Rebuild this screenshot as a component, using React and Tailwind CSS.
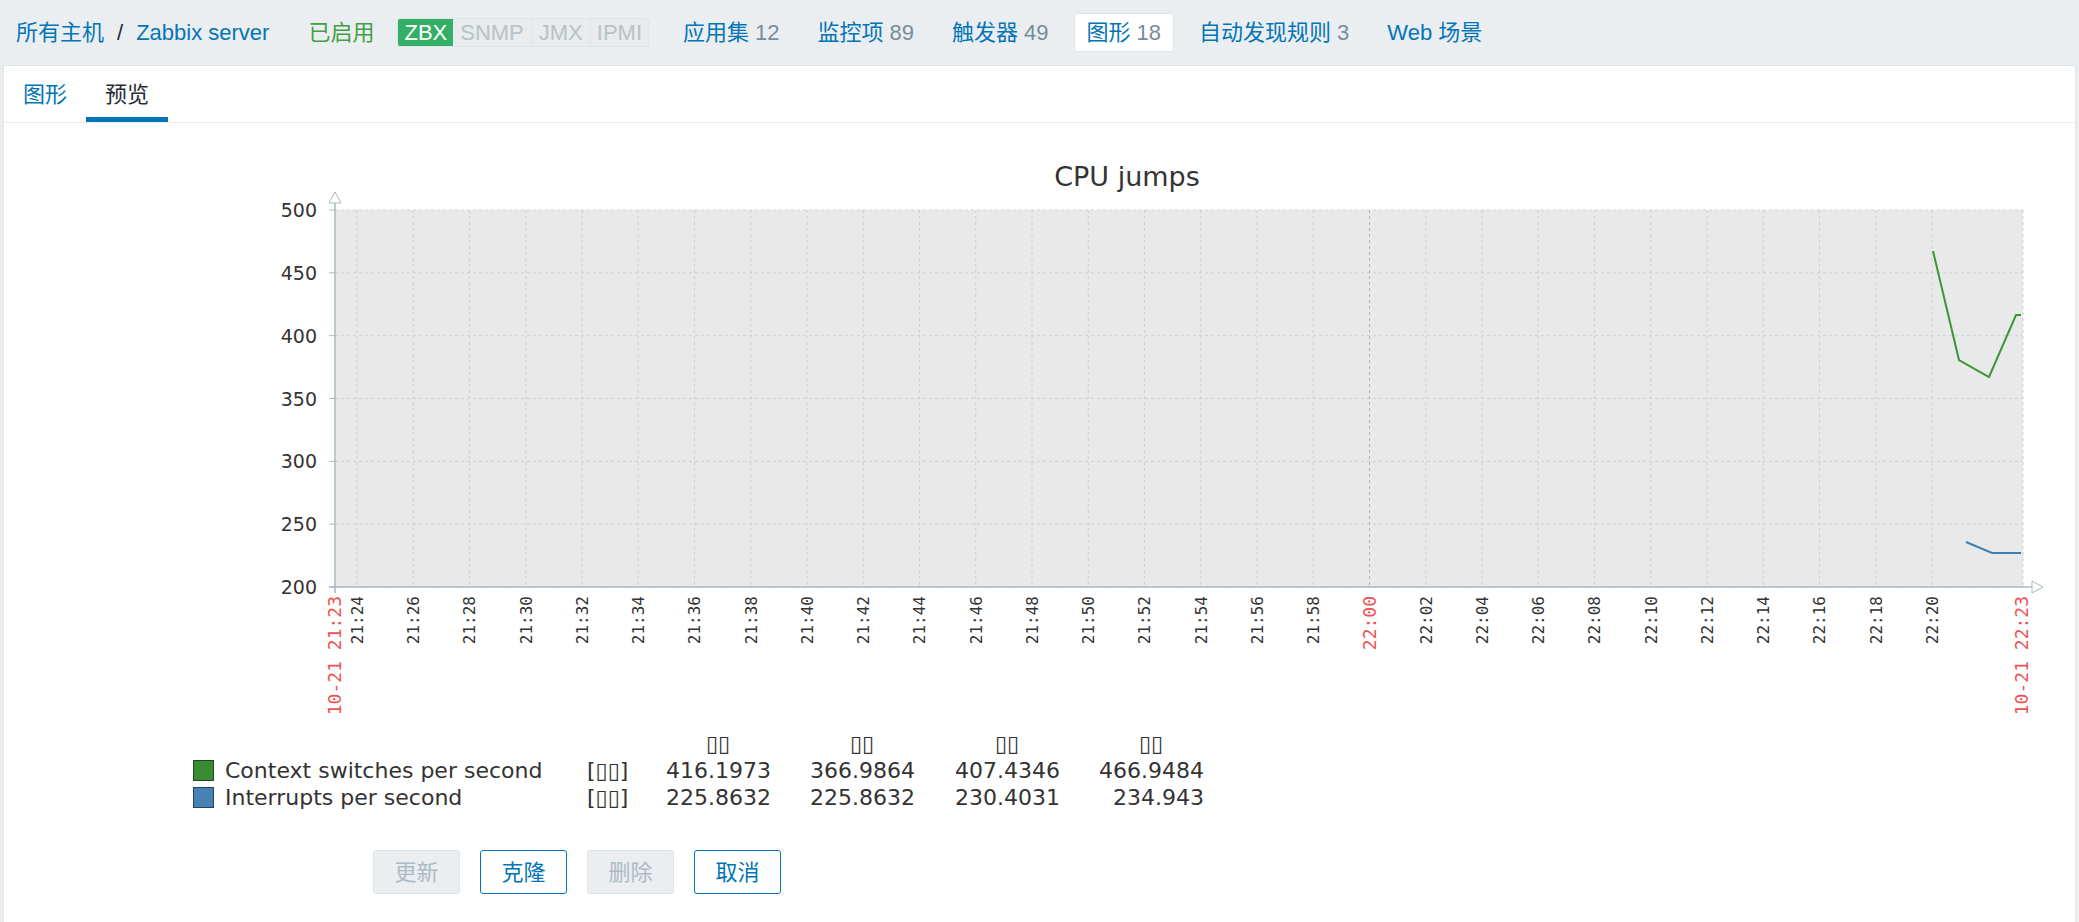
import React from 'react'

const sans = "font-['Liberation_Sans','Noto_Sans_CJK_SC',sans-serif]"

// plot area in page coordinates (the svg's viewBox starts at its own page offset)
const X0 = 335
const X1 = 2023
const Y0 = 210
const Y1 = 587
const yFor = (v) => Y0 + ((500 - v) * (Y1 - Y0)) / 300
const tickX = (k) => 357 + k * 56.25

// 21:24 .. 22:20, every two minutes (22:22 sits too close to the end label)
const ticks = Array.from({ length: 29 }, (_, k) => {
  const m = 24 + k * 2
  const h = m >= 60 ? 22 : 21
  const mm = String(m % 60).padStart(2, '0')
  return { x: tickX(k), label: `${h}:${mm}`, major: m === 60 }
})

const navItems = [
  { label: '应用集', count: 12 },
  { label: '监控项', count: 89 },
  { label: '触发器', count: 49 },
  { label: '图形', count: 18, active: true },
  { label: '自动发现规则', count: 3 },
  { label: 'Web 场景' },
]

const legend = [
  { name: 'Context switches per second', fill: '#3a8c34', border: '#1e4a1a', values: ['416.1973', '366.9864', '407.4346', '466.9484'] },
  { name: 'Interrupts per second', fill: '#4682b4', border: '#23425c', values: ['225.8632', '225.8632', '230.4031', '234.943'] },
]

function RotLabel({ x, text, size, color }) {
  const bx = x + size * 0.36
  return (
    <text
      transform={`translate(${bx} 596) rotate(-90)`}
      textAnchor="end"
      fontSize={size}
      fontFamily="DejaVu Sans Mono, monospace"
      fill={color}
    >
      {text}
    </text>
  )
}

function Chart() {
  const hLines = [500, 450, 400, 350, 300, 250, 200]
  return (
    <svg width={2040} height={602} viewBox="4 123 2040 602" className="block">
      <text x={1127} y={186} textAnchor="middle" fontSize={27} fontFamily="DejaVu Sans, sans-serif" fill="#333">
        CPU jumps
      </text>

      <rect x={X0} y={Y0} width={X1 - X0} height={Y1 - Y0} fill="#e9e9e9" />

      {hLines.map((v) => (
        <g key={v}>
          <line x1={X0} x2={X1} y1={yFor(v)} y2={yFor(v)} stroke="#c9d2d7" strokeDasharray="3 3" />
          <line x1={X0 - 6} x2={X0} y1={yFor(v)} y2={yFor(v)} stroke="#aab8bf" />
          <text x={317} y={yFor(v) + 7} textAnchor="end" fontSize={19} fontFamily="DejaVu Sans, sans-serif" fill="#333">
            {v}
          </text>
        </g>
      ))}

      {ticks.map((t) => (
        <line
          key={t.label}
          x1={t.x}
          x2={t.x}
          y1={Y0}
          y2={Y1}
          stroke={t.major ? '#a9b5bb' : '#c9d2d7'}
          strokeDasharray="3 3"
        />
      ))}
      <line x1={X1} x2={X1} y1={Y0} y2={Y1} stroke="#c9d2d7" strokeDasharray="3 3" />

      {/* axes */}
      <line x1={X0} x2={X0} y1={203} y2={593} stroke="#aab8bf" strokeWidth={1.5} />
      <line x1={X0 - 6} x2={2032} y1={Y1} y2={Y1} stroke="#aab8bf" strokeWidth={1.5} />
      <polygon points="335,192 329,203 341,203" fill="white" stroke="#aab8bf" />
      <polygon points="2043,587 2032,581 2032,593" fill="white" stroke="#aab8bf" />

      {/* data */}
      <polyline
        points="1933,251 1959,360 1989,377 2016,315 2021,315"
        fill="none"
        stroke="#3c9637"
        strokeWidth={2}
      />
      <polyline points="1966,542 1992,553 2021,553" fill="none" stroke="#3f7fb5" strokeWidth={2} />

      {/* time labels */}
      {ticks.map((t) => (
        <RotLabel
          key={t.label}
          x={t.x}
          text={t.label}
          size={t.major ? 18 : 16}
          color={t.major ? '#f05050' : '#333'}
        />
      ))}
      <RotLabel x={X0} text="10-21 21:23" size={18} color="#f05050" />
      <RotLabel x={2022} text="10-21 22:23" size={18} color="#f05050" />
    </svg>
  )
}

function Legend() {
  const cols = ['w-[143px]', 'w-[144px]', 'w-[145px]', 'w-[144px]']
  return (
    <div className="font-['DejaVu_Sans',sans-serif] text-[22px] leading-[27px] text-[#333] pt-[5px] pl-[189px]">
      <div className="flex">
        <div className="w-[434px]" />
        {cols.map((c, i) => (
          <div key={i} className={`${c} flex justify-end`}>
            <span className="w-[104px] text-center">▯▯</span>
          </div>
        ))}
      </div>
      {legend.map((row) => (
        <div key={row.name} className="flex items-center">
          <span
            className="w-[21px] h-[21px] border mr-[11px] shrink-0"
            style={{ background: row.fill, borderColor: row.border }}
          />
          <span className="w-[362px] whitespace-nowrap">{row.name}</span>
          <span className="w-[41px] whitespace-nowrap">[▯▯]</span>
          {row.values.map((v, i) => (
            <span key={i} className={`${cols[i]} text-right`}>{v}</span>
          ))}
        </div>
      ))}
    </div>
  )
}

export default function App() {
  return (
    <div className={`${sans} h-[922px] flex flex-col bg-[#ebeef0] text-[22px] overflow-hidden`}>
      {/* host navigation */}
      <div className="h-[65px] shrink-0 flex items-center pl-[16px] whitespace-nowrap">
        <a className="text-[#0275b8]">所有主机</a>
        <span className="mx-[13px] text-[#1f2c33]">/</span>
        <a className="text-[#0275b8]">Zabbix server</a>
        <span className="ml-[39px] text-[#429e47]">已启用</span>
        <div className="ml-[23px] flex h-[29px] rounded-[3px] overflow-hidden border border-[#dfe4e7] leading-[27px]">
          <span className="px-[6px] bg-[#34af67] text-white">ZBX</span>
          <span className="px-[7px] bg-[#e9ebec] text-[#b7c2c8] border-r border-[#dfe4e7]">SNMP</span>
          <span className="px-[7px] bg-[#e9ebec] text-[#b7c2c8] border-r border-[#dfe4e7]">JMX</span>
          <span className="px-[6px] bg-[#e9ebec] text-[#b7c2c8]">IPMI</span>
        </div>
        <div className="ml-[21px] flex items-center gap-[12px]">
          {navItems.map((it) => (
            <a
              key={it.label}
              className={`h-[39px] px-[12px] flex items-center rounded-[3px] border ${
                it.active ? 'bg-white border-[#dfe4e7]' : 'border-transparent'
              }`}
            >
              <span className="text-[#0275b8]">{it.label}</span>
              {it.count !== undefined && <span className="ml-[6px] text-[#768d99]">{it.count}</span>}
            </a>
          ))}
        </div>
      </div>

      {/* panel */}
      <div className="flex-1 mx-[3px] bg-white border border-b-0 border-[#dfe4e7] flex flex-col">
        <div className="h-[57px] shrink-0 flex border-b border-[#ebeef0]">
          <a className="px-[19px] flex items-center text-[#0275b8]">图形</a>
          <a className="px-[19px] flex items-center text-[#1f2c33] border-b-[5px] border-[#0275b8] pt-[5px]">预览</a>
        </div>

        <Chart />
        <Legend />

        <div className="mt-[39px] ml-[369px] flex gap-[20px]">
          <button className="w-[87px] h-[44px] rounded-[3px] border border-[#dfe4e7] bg-[#ebeef0] text-[#acbbc2]">更新</button>
          <button className="w-[87px] h-[44px] rounded-[3px] border border-[#0275b8] bg-white text-[#0275b8]">克隆</button>
          <button className="w-[87px] h-[44px] rounded-[3px] border border-[#dfe4e7] bg-[#ebeef0] text-[#acbbc2]">删除</button>
          <button className="w-[87px] h-[44px] rounded-[3px] border border-[#0275b8] bg-white text-[#0275b8]">取消</button>
        </div>
      </div>
    </div>
  )
}
